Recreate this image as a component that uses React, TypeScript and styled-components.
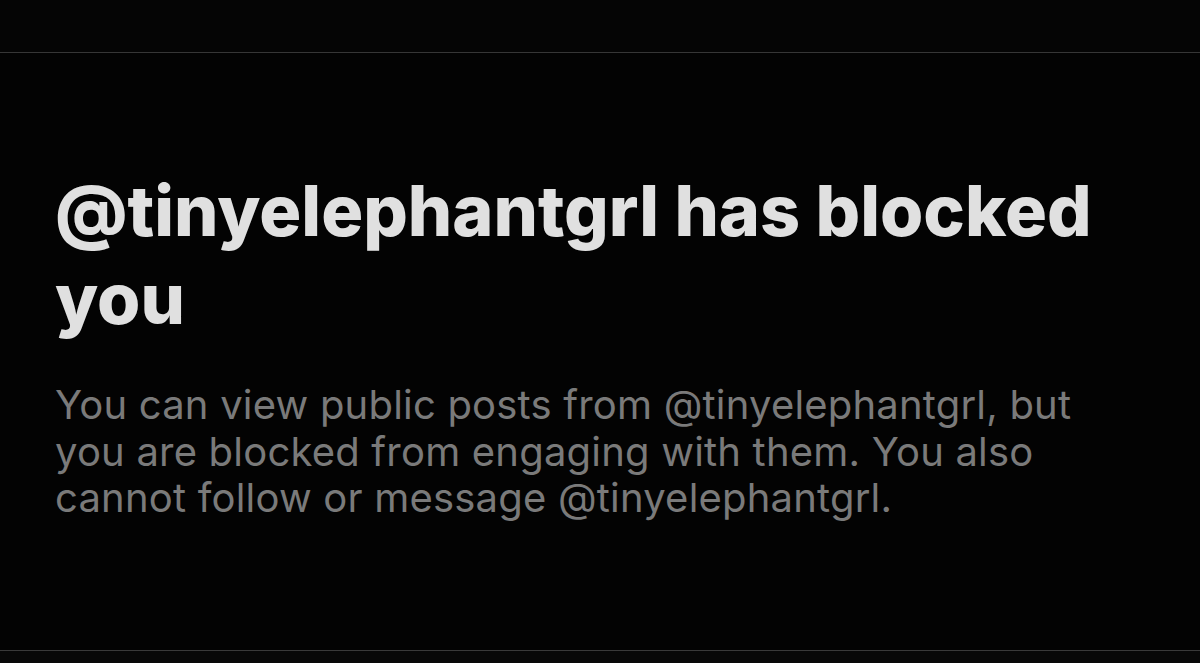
import React from "react";
import styled, { createGlobalStyle } from "styled-components";

const Global = createGlobalStyle`
  html, body { margin: 0; padding: 0; background: #030303; }
  body { font-family: Inter, "Noto Sans", sans-serif; }
`;

const Page = styled.div`
  width: 1200px;
  height: 663px;
  display: flex;
  flex-direction: column;
  background: #030303;
  overflow: hidden;
`;

const TopBar = styled.div`
  height: 52px;
  flex: none;
  background: #050505;
  border-bottom: 1px solid #363636;
`;

const Content = styled.main`
  flex: 1;
  padding: 114px 55px 0 55px;
  border-bottom: 1px solid #3a3a3a;
`;

const Title = styled.h1`
  margin: 0;
  max-width: 1080px;
  font-size: 70px;
  line-height: 88px;
  font-weight: 800;
  letter-spacing: 0;
  color: #e0e0e0;
`;

const Body = styled.p`
  margin: 39px 0 0 0;
  max-width: 1040px;
  font-size: 40px;
  line-height: 46.5px;
  font-weight: 400;
  letter-spacing: 0.2px;
  color: #7a7a7a;
`;

const Footer = styled.div`
  height: 12px;
  flex: none;
  background: #080808;
`;

export default function App() {
  return (
    <>
      <Global />
      <Page>
        <TopBar />
        <Content>
          <Title>@tinyelephantgrl has blocked you</Title>
          <Body>
            You can view public posts from @tinyelephantgrl, but you are blocked
            from engaging with them. You also cannot follow or message
            @tinyelephantgrl.
          </Body>
        </Content>
        <Footer />
      </Page>
    </>
  );
}
